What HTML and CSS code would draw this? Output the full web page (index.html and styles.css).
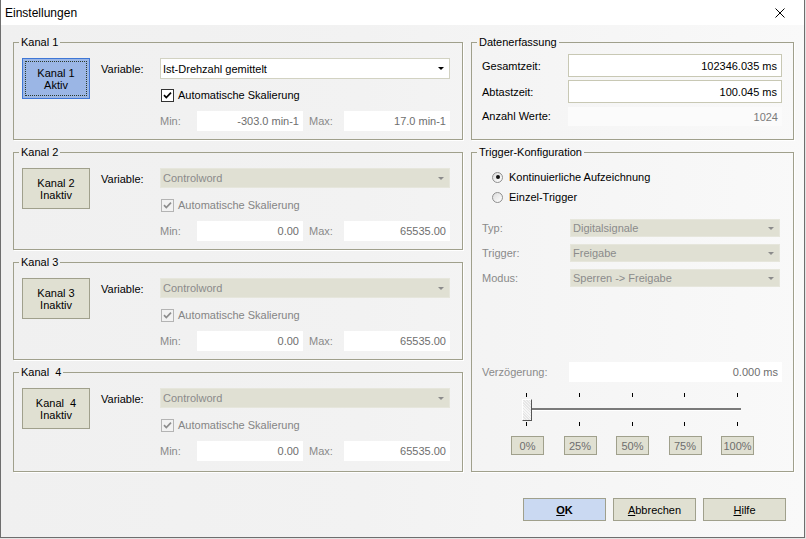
FILE: index.html
```html
<!DOCTYPE html>
<html lang="de">
<head>
<meta charset="utf-8">
<title>Einstellungen</title>
<link rel="stylesheet" href="styles.css">
</head>
<body>
<div class="window">
  <div class="titlebar">
    <span class="title">Einstellungen</span>
    <span class="close"><svg width="10" height="10" viewBox="0 0 10 10"><path d="M0.5 0.5 L9.5 9.5 M9.5 0.5 L0.5 9.5" stroke="#000" stroke-width="1" fill="none"/></svg></span>
  </div>
  <div class="content">
    <div class="columns">
      <div class="left">
        <fieldset class="group kanal">
          <legend>Kanal 1</legend>
          <div class="kbody">
            <div class="kbtn active"><span>Kanal 1</span><span>Aktiv</span></div>
            <div class="kgrid">
              <span class="lbl">Variable:</span>
              <div class="select"><span>Ist-Drehzahl gemittelt</span><i class="arrow"></i></div>
              <div class="check"><span class="cb"><svg width="11" height="11" viewBox="0 0 11 11"><path d="M2 5.2 L4.3 7.6 L9 2.6" stroke="#000" stroke-width="1.7" fill="none"/></svg></span><span>Automatische Skalierung</span></div>
              <div class="minmax">
                <span class="mlbl">Min:</span><span class="val">-303.0 min-1</span>
                <span class="mlbl mx">Max:</span><span class="val">17.0 min-1</span>
              </div>
            </div>
          </div>
        </fieldset>
        <fieldset class="group kanal">
          <legend>Kanal 2</legend>
          <div class="kbody">
            <div class="kbtn"><span>Kanal 2</span><span>Inaktiv</span></div>
            <div class="kgrid">
              <span class="lbl">Variable:</span>
              <div class="select disabled"><span>Controlword</span><i class="arrow"></i></div>
              <div class="check disabled"><span class="cb"><svg width="11" height="11" viewBox="0 0 11 11"><path d="M2 5.2 L4.3 7.6 L9 2.6" stroke="#8d8d8d" stroke-width="1.7" fill="none"/></svg></span><span>Automatische Skalierung</span></div>
              <div class="minmax">
                <span class="mlbl">Min:</span><span class="val">0.00</span>
                <span class="mlbl mx">Max:</span><span class="val">65535.00</span>
              </div>
            </div>
          </div>
        </fieldset>
        <fieldset class="group kanal">
          <legend>Kanal 3</legend>
          <div class="kbody">
            <div class="kbtn"><span>Kanal 3</span><span>Inaktiv</span></div>
            <div class="kgrid">
              <span class="lbl">Variable:</span>
              <div class="select disabled"><span>Controlword</span><i class="arrow"></i></div>
              <div class="check disabled"><span class="cb"><svg width="11" height="11" viewBox="0 0 11 11"><path d="M2 5.2 L4.3 7.6 L9 2.6" stroke="#8d8d8d" stroke-width="1.7" fill="none"/></svg></span><span>Automatische Skalierung</span></div>
              <div class="minmax">
                <span class="mlbl">Min:</span><span class="val">0.00</span>
                <span class="mlbl mx">Max:</span><span class="val">65535.00</span>
              </div>
            </div>
          </div>
        </fieldset>
        <fieldset class="group kanal last">
          <legend>Kanal&nbsp; 4</legend>
          <div class="kbody">
            <div class="kbtn"><span>Kanal&nbsp; 4</span><span>Inaktiv</span></div>
            <div class="kgrid">
              <span class="lbl">Variable:</span>
              <div class="select disabled"><span>Controlword</span><i class="arrow"></i></div>
              <div class="check disabled"><span class="cb"><svg width="11" height="11" viewBox="0 0 11 11"><path d="M2 5.2 L4.3 7.6 L9 2.6" stroke="#8d8d8d" stroke-width="1.7" fill="none"/></svg></span><span>Automatische Skalierung</span></div>
              <div class="minmax">
                <span class="mlbl">Min:</span><span class="val">0.00</span>
                <span class="mlbl mx">Max:</span><span class="val">65535.00</span>
              </div>
            </div>
          </div>
        </fieldset>
      </div>
      <div class="right">
        <fieldset class="group daten">
          <legend>Datenerfassung</legend>
          <div class="dgrid">
            <span class="lbl">Gesamtzeit:</span><span class="field">102346.035 ms</span>
            <span class="lbl">Abtastzeit:</span><span class="field">100.045 ms</span>
            <span class="lbl">Anzahl Werte:</span><span class="field ro">1024</span>
          </div>
        </fieldset>
        <fieldset class="group trigger">
          <legend>Trigger-Konfiguration</legend>
          <div class="tbody">
            <div class="radios">
              <div class="rrow"><span class="radio checked"></span><span>Kontinuierliche Aufzeichnung</span></div>
              <div class="rrow"><span class="radio"></span><span>Einzel-Trigger</span></div>
            </div>
            <div class="tgrid">
              <span class="glbl">Typ:</span><div class="select disabled small"><span>Digitalsignale</span><i class="arrow"></i></div>
              <span class="glbl">Trigger:</span><div class="select disabled small"><span>Freigabe</span><i class="arrow"></i></div>
              <span class="glbl">Modus:</span><div class="select disabled small"><span>Sperren -&gt; Freigabe</span><i class="arrow"></i></div>
            </div>
            <div class="delay">
              <span class="glbl">Verzögerung:</span><span class="val dval">0.000 ms</span>
            </div>
            <div class="slider">
              <div class="ticks"><i></i><i></i><i></i><i></i><i></i></div>
              <div class="track"><span class="thumb"></span></div>
              <div class="ticks"><i></i><i></i><i></i><i></i><i></i></div>
            </div>
            <div class="pcts">
              <span>0%</span><span>25%</span><span>50%</span><span>75%</span><span>100%</span>
            </div>
          </div>
        </fieldset>
      </div>
    </div>
    <div class="buttons">
      <span class="btn ok"><u>O</u>K</span>
      <span class="btn"><u>A</u>bbrechen</span>
      <span class="btn"><u>H</u>ilfe</span>
    </div>
  </div>
</div>
</body>
</html>
```
FILE: styles.css
```css
* { box-sizing: border-box; }
html, body { margin: 0; padding: 0; }
body {
  width: 806px;
  height: 539px;
  background: #e4e4e4;
  font-family: "Liberation Sans", Arial, sans-serif;
  font-size: 11px;
  color: #000;
  overflow: hidden;
}
.window {
  width: 805px;
  height: 538px;
  border: 1px solid #6e6e6e;
  border-top: 0;
  background: linear-gradient(to right, #f0f0f0 0%, #f2f2f2 45%, #f9f9f9 100%);
  display: flex;
  flex-direction: column;
}
.titlebar {
  height: 25px;
  background: #fff;
  display: flex;
  align-items: center;
  justify-content: space-between;
  padding-left: 4px;
  flex: none;
}
.title { font-size: 12px; }
.close {
  width: 46px;
  height: 25px;
  display: flex;
  align-items: center;
  justify-content: center;
  margin-right: 1px;
}
.content { padding: 11px 10px 0 12px; }
.columns { display: flex; gap: 8px; }
.left { width: 450px; display: flex; flex-direction: column; gap: 6px; }
.right { width: 323px; display: flex; flex-direction: column; gap: 6px; }

fieldset.group {
  margin: 0;
  padding: 0;
  min-width: 0;
  border: 1px solid #a0a08c;
  box-shadow: 1px 1px 0 #fff;
}
legend {
  padding: 0 2px;
  margin-left: 5px;
  line-height: 13px;
  font-size: 11px;
}
.kanal { height: 104px; }
.kanal.last { height: 106px; }
.kbody { display: flex; padding: 9px 0 0 8px; }
.kbtn {
  flex: none;
  width: 68px;
  height: 41px;
  margin-right: 11px;
  border: 1px solid #a0a08c;
  background: #e0e0d2;
  display: flex;
  flex-direction: column;
  align-items: center;
  justify-content: center;
  line-height: 12px;
  position: relative;
}
.kbtn.active { background: #9bb6e5; border-color: #3f77d6; }
.kbtn.active::after {
  content: "";
  position: absolute;
  left: 2px; top: 2px; right: 2px; bottom: 2px;
  border: 1px dotted #2a3a2a;
}
.kgrid {
  display: grid;
  grid-template-columns: 59px 290px;
  grid-template-rows: 21px 14px 20px;
  row-gap: 9px;
}
.lbl { align-self: center; }
.select {
  display: flex;
  align-items: center;
  justify-content: space-between;
  height: 21px;
  padding-left: 2px;
  border: 1px solid #d2d2c2;
  background: #fff;
}
.select .arrow {
  width: 0; height: 0;
  border-left: 3px solid transparent;
  border-right: 3px solid transparent;
  border-top: 3px solid #000;
  margin-right: 5px;
}
.select.disabled { background: #e0e0d3; border-color: #e6e6dc; color: #8b8b8b; height: 20px; }
.select.disabled .arrow { border-top-color: #8b8b8b; }
.select.small { height: 18px; }
.check {
  grid-column: 2;
  display: flex;
  align-items: center;
  gap: 4px;
  padding-left: 1px;
}
.cb {
  width: 13px; height: 13px;
  border: 1px solid #333;
  background: #fff;
  display: flex;
  align-items: center;
  justify-content: center;
}
.check.disabled { color: #858585; }
.check.disabled .cb { border-color: #b4b4b4; background: #f2f2f2; }
.minmax { grid-column: 2; display: flex; align-items: stretch; }
.mlbl { width: 37px; color: #8a8a8a; align-self: center; }
.mlbl.mx { width: 35px; margin-left: 6px; }
.val {
  width: 106px;
  background: #fff;
  color: #6e6e6e;
  text-align: right;
  padding-right: 4px;
  display: flex;
  align-items: center;
  justify-content: flex-end;
}

.daten { height: 104px; }
.dgrid {
  display: grid;
  grid-template-columns: 86px 214px;
  grid-template-rows: 23px 23px 20px;
  row-gap: 3px;
  padding: 5px 0 0 10px;
}
.field {
  border: 1px solid #c8c8b4;
  background: #fff;
  display: flex;
  align-items: center;
  justify-content: flex-end;
  padding-right: 4px;
}
.field.ro { border: 0; background: #fbfbfb; color: #7a7a7a; margin-top: 1px; }

.trigger { height: 326px; }
.tbody { padding: 8px 0 0 10px; }
.radios { padding-left: 10px; }
.rrow { display: flex; align-items: center; height: 20px; gap: 6px; }
.radio {
  width: 11px; height: 11px;
  border-radius: 50%;
  border: 1px solid #8f8f8f;
  background: linear-gradient(135deg, #dcdcdc, #ffffff);
  display: flex;
  align-items: center;
  justify-content: center;
}
.radio.checked::after {
  content: "";
  width: 4px; height: 4px;
  border-radius: 50%;
  background: #111;
}
.tgrid {
  display: grid;
  grid-template-columns: 88px 210px;
  grid-auto-rows: 18px;
  row-gap: 7px;
  margin-top: 12px;
}
.glbl { color: #8a8a8a; align-self: center; }
.delay {
  display: grid;
  grid-template-columns: 87px 213px;
  height: 20px;
  margin-top: 75px;
}
.val.dval { width: auto; }
.slider { margin-top: 11px; padding-left: 40px; }
.ticks {
  width: 212px;
  margin-left: 4px;
  height: 4px;
  display: flex;
  justify-content: space-between;
}
.ticks i { width: 1px; height: 4px; background: #000; }
.track {
  position: relative;
  width: 219px;
  height: 22px;
  margin: 2px 0 1px 0;
}
.track::before {
  content: "";
  position: absolute;
  left: 9px; right: 0; top: 9px;
  height: 2px;
  background: #7a7a7a;
  box-shadow: 0 1px 0 #fff;
}
.thumb {
  position: absolute;
  left: 0; top: 0;
  width: 10px; height: 22px;
  border-top: 1px solid #fff;
  border-left: 1px solid #fff;
  border-right: 1px solid #555;
  border-bottom: 1px solid #555;
  background: repeating-linear-gradient(45deg, #e6e6e6 0 1px, #f6f6f6 1px 2px);
}
.pcts {
  display: flex;
  justify-content: space-between;
  width: 243px;
  margin: 10px 0 0 29px;
}
.pcts span {
  width: 33px;
  height: 19px;
  border: 1px solid #a0a08c;
  background: #e0e0d2;
  color: #6e6e6e;
  display: flex;
  align-items: center;
  justify-content: center;
}
.buttons {
  display: flex;
  justify-content: flex-end;
  gap: 7px;
  margin-top: 26px;
  padding-right: 8px;
}
.btn {
  width: 83px;
  height: 23px;
  border: 1px solid #a0a08c;
  background: #e0e0d2;
  display: flex;
  align-items: center;
  justify-content: center;
}
.btn.ok { background: #cad9f2; font-weight: bold; }
```
